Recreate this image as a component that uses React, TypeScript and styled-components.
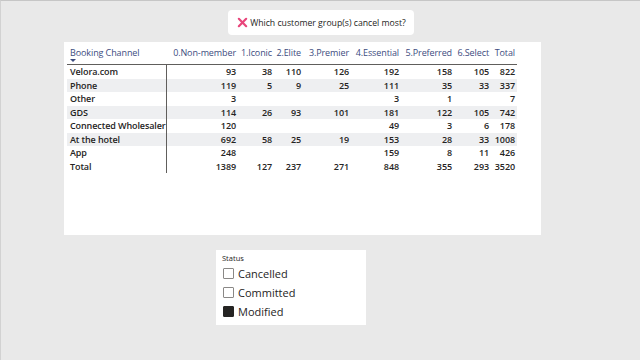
import React from "react";
import styled, { createGlobalStyle } from "styled-components";

const GlobalStyle = createGlobalStyle`
  html, body {
    margin: 0;
    padding: 0;
  }
  body {
    font-family: "Open Sans", "Noto Sans", sans-serif;
    color: #252423;
  }
`;

const columns = [
  "0.Non-member",
  "1.Iconic",
  "2.Elite",
  "3.Premier",
  "4.Essential",
  "5.Preferred",
  "6.Select",
  "Total",
];

type Row = { channel: string; values: (number | null)[]; total?: boolean };

const rows: Row[] = [
  { channel: "Velora.com", values: [93, 38, 110, 126, 192, 158, 105, 822] },
  { channel: "Phone", values: [119, 5, 9, 25, 111, 35, 33, 337] },
  { channel: "Other", values: [3, null, null, null, 3, 1, null, 7] },
  { channel: "GDS", values: [114, 26, 93, 101, 181, 122, 105, 742] },
  { channel: "Connected Wholesaler", values: [120, null, null, null, 49, 3, 6, 178] },
  { channel: "At the hotel", values: [692, 58, 25, 19, 153, 28, 33, 1008] },
  { channel: "App", values: [248, null, null, null, 159, 8, 11, 426] },
  { channel: "Total", values: [1389, 127, 237, 271, 848, 355, 293, 3520], total: true },
];

const statuses = [
  { label: "Cancelled", checked: false },
  { label: "Committed", checked: false },
  { label: "Modified", checked: true },
];

const Page = styled.div`
  box-sizing: border-box;
  width: 640px;
  height: 360px;
  background: #e9e9e9;
  border-top: 1px solid #c6c6c6;
  border-left: 1px solid #d2d2d2;
  display: flex;
  flex-direction: column;
  padding-top: 9px;
`;

const TitleCard = styled.div`
  align-self: center;
  margin-left: 1px;
  height: 25px;
  padding: 0 8px 0 9px;
  background: #ffffff;
  border-radius: 4px;
  display: flex;
  align-items: center;
  gap: 2px;
  font-size: 8.7px;
  color: #252423;
`;

const Panel = styled.div<{ $left: number; $width: number; $height: number; $top: number }>`
  box-sizing: border-box;
  margin-left: ${({ $left }) => $left}px;
  margin-top: ${({ $top }) => $top}px;
  width: ${({ $width }) => $width}px;
  height: ${({ $height }) => $height}px;
  background: #ffffff;
`;

const TableWrap = styled.div`
  padding: 4px 0 0 3px;
`;

const Grid = styled.div`
  display: grid;
  grid-template-columns: 100px 71px 36px 29px 48px 50px 53px 37px 26px;
  font-size: 9px;
`;

const HeaderCell = styled.div<{ $first?: boolean }>`
  height: 18px;
  border-bottom: 1px solid #605e5c;
  color: #3d4c80;
  text-align: ${({ $first }) => ($first ? "left" : "right")};
  padding: ${({ $first }) => ($first ? "0 0 0 3px" : "0 2px 0 0")};
  line-height: 13px;
  white-space: nowrap;
  letter-spacing: -0.1px;
  position: relative;
`;

const SortArrow = styled.span`
  position: absolute;
  left: 3px;
  top: 13px;
  width: 0;
  height: 0;
  border-left: 3px solid transparent;
  border-right: 3px solid transparent;
  border-top: 3px solid #3d4c80;
`;

const Cell = styled.div<{ $first?: boolean; $striped?: boolean }>`
  height: 13.5px;
  line-height: 13.5px;
  font-weight: 600;
  white-space: nowrap;
  background: ${({ $striped }) => ($striped ? "#eeeff1" : "transparent")};
  text-align: ${({ $first }) => ($first ? "left" : "right")};
  padding: ${({ $first }) => ($first ? "0 0 0 3px" : "0 2px 0 0")};
  border-right: ${({ $first }) => ($first ? "1px solid #605e5c" : "none")};
  letter-spacing: -0.1px;
`;

const SlicerTitle = styled.div`
  font-size: 7.5px;
  color: #252423;
  margin: 3px 0 1px 6px;
`;

const OptionRow = styled.div`
  display: flex;
  align-items: center;
  height: 19px;
  padding-left: 7px;
  gap: 4px;
  font-size: 11px;
`;

const Box = styled.span<{ $checked: boolean }>`
  box-sizing: border-box;
  width: 11px;
  height: 11px;
  border: 1px solid #8a8886;
  border-radius: 1px;
  background: ${({ $checked }) => ($checked ? "#252423" : "#ffffff")};
  border-color: ${({ $checked }) => ($checked ? "#252423" : "#8a8886")};
`;

function CrossIcon(): JSX.Element {
  return (
    <svg width="11" height="11" viewBox="0 0 12 12">
      <path
        d="M2 2 L10 10 M10 2 L2 10"
        stroke="#e8457b"
        strokeWidth="2.4"
        strokeLinecap="round"
      />
    </svg>
  );
}

export default function App(): JSX.Element {
  return (
    <Page>
      <GlobalStyle />
      <TitleCard>
        <CrossIcon />
        Which customer group(s) cancel most?
      </TitleCard>

      <Panel $left={63} $top={7} $width={477} $height={193}>
        <TableWrap>
          <Grid>
            <HeaderCell $first>
              Booking Channel
              <SortArrow />
            </HeaderCell>
            {columns.map((c) => (
              <HeaderCell key={c}>{c}</HeaderCell>
            ))}
            {rows.map((r, i) => {
              const striped = !r.total && i % 2 === 1;
              return (
                <React.Fragment key={r.channel}>
                  <Cell $first $striped={striped}>
                    {r.channel}
                  </Cell>
                  {r.values.map((v, j) => (
                    <Cell key={j} $striped={striped}>
                      {v ?? ""}
                    </Cell>
                  ))}
                </React.Fragment>
              );
            })}
          </Grid>
        </TableWrap>
      </Panel>

      <Panel $left={215} $top={15} $width={150} $height={75}>
        <SlicerTitle>Status</SlicerTitle>
        {statuses.map((s) => (
          <OptionRow key={s.label}>
            <Box $checked={s.checked} />
            {s.label}
          </OptionRow>
        ))}
      </Panel>
    </Page>
  );
}
